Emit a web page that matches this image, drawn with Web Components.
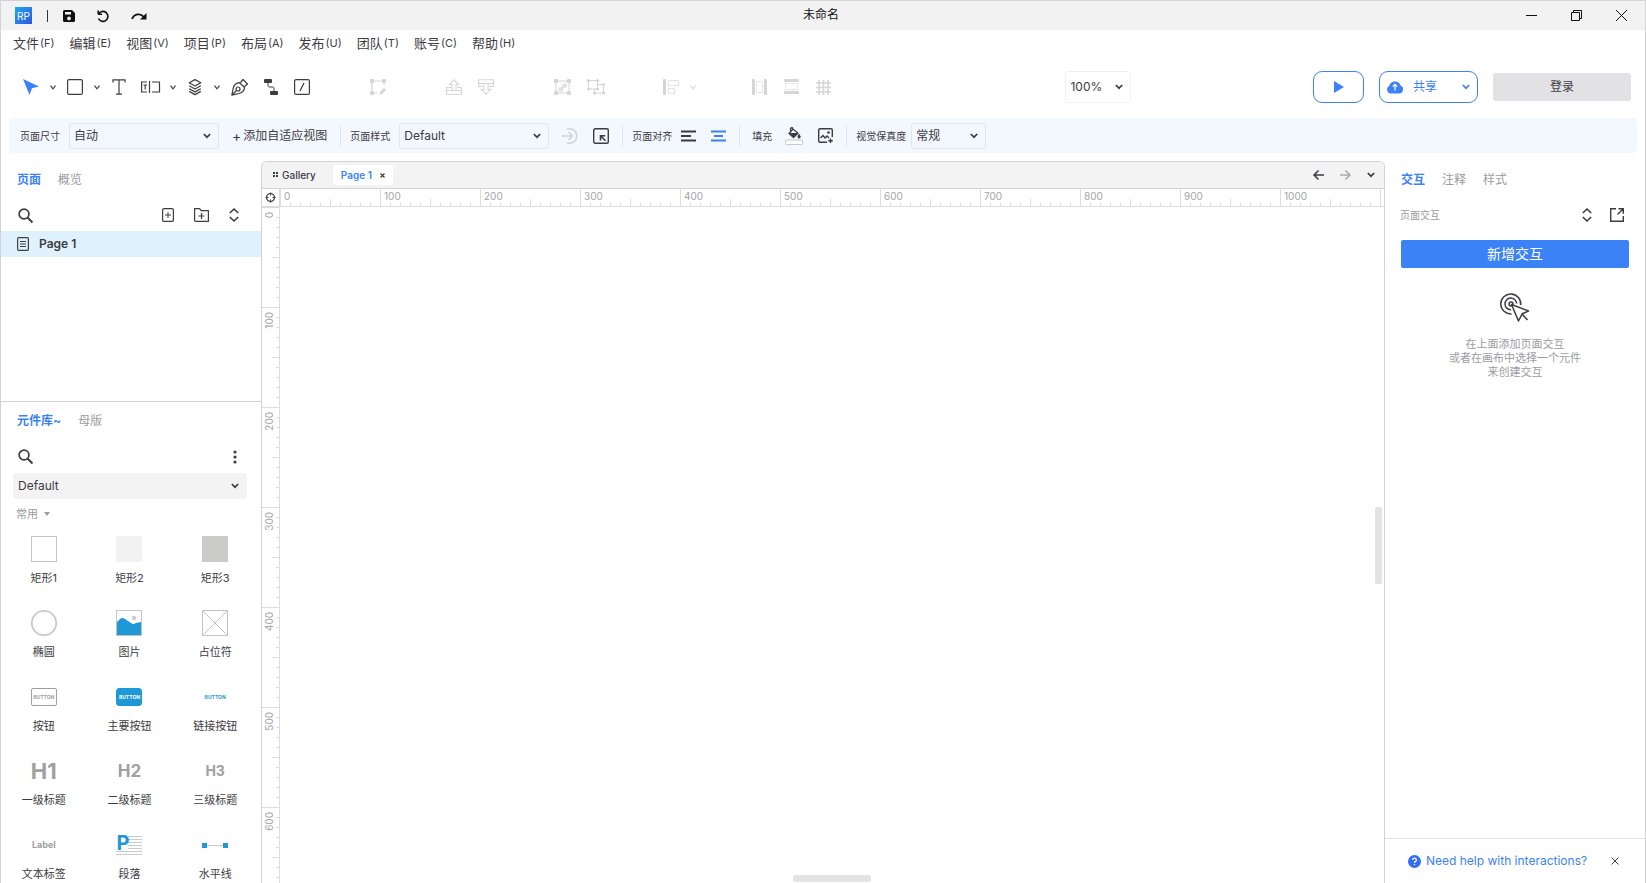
<!DOCTYPE html>
<html lang="zh-CN">
<head>
<meta charset="utf-8">
<title>未命名</title>
<style>
  :root {
    --ink: #3c3c43; --muted: #9b9ba1; --line: #d3d3d5; --soft: #e2e2e4;
    --blue: #3b82f6; --bar: #f3f7fe; --grey: #f3f3f3;
  }
  html, body { margin: 0; height: 100%; }
  body { font: 12px/16px Inter, "Noto Sans CJK SC", sans-serif; color: var(--ink); background: #fff; }
</style>
</head>
<body>
<rp-app></rp-app>
<script>
const RESET = `
  *, *::before { box-sizing: border-box; }
  button, select, input { font: inherit; color: inherit; margin: 0; padding: 0; border: 0; background: none; }
  button { display: inline-flex; align-items: center; justify-content: center; }
  a { color: inherit; text-decoration: none; }
  svg { display: block; overflow: visible; }
`;
function define(name, css, html, setup) {
  const tpl = document.createElement('template');
  tpl.innerHTML = `<style>${RESET}${css}</style>${html}`;
  customElements.define(name, class extends HTMLElement {
    connectedCallback() {
      if (this.shadowRoot) return;
      this.attachShadow({ mode: 'open' }).append(tpl.content.cloneNode(true));
      if (setup) setup(this, this.shadowRoot);
    }
  });
}

/* Each icon: [width, height, markup]. Strokes use currentColor. */
const S = 'fill="none" stroke="currentColor"';
const ICONS = {
  save: [12, 12, `<path fill="currentColor" fill-rule="evenodd" d="M1.500 0H9l3 3v7.500a1.500 1.500 0 0 1-1.500 1.500h-9A1.500 1.500 0 0 1 0 10.500v-9A1.500 1.500 0 0 1 1.500 0zM2 2v2.500h6V2zM6 6.500a1.900 1.900 0 1 0 0 3.800 1.900 1.900 0 0 0 0-3.800z"/>`],
  undo: [12, 12, `<path ${S} stroke-width="1.600" d="M1.200 4.200H5M1.200.500v3.700M1.500 4A5 5 0 1 1 1.400 8.500"/>`],
  redo: [16, 8, `<path ${S} stroke-width="1.800" d="M1 7c2-5 8-6.500 12-2"/><path fill="currentColor" d="M15.500 1v6.500H9z"/>`],
  min: [11, 11, `<path ${S} d="M0 5.500h11"/>`],
  restore: [11, 11, `<path ${S} d="M.500 2.500h8v8h-8zM2.500 2.500v-2h8v8h-2"/>`],
  close: [11, 11, `<path ${S} d="M0 0l11 11M11 0L0 11"/>`],
  cursor: [16, 16, `<path fill="#3b82f6" d="M0 0l16 7.500-7 1.700L6.500 16z"/>`],
  chev: [6, 5, `<path ${S} stroke-width="1.200" d="M.500.700L3 3.800 5.500.700"/>`],
  down: [8, 6, `<path ${S} stroke-width="1.700" d="M.800 1L4 4.200 7.200 1"/>`],
  rect: [16, 16, `<rect ${S} stroke-width="1.200" x=".600" y=".600" width="14.800" height="14.800" rx="1.500"/>`],
  text: [15, 16, `<path ${S} stroke-width="1.200" d="M2 3.500V.800h12v2.700M8 .800v14.400M5 15.200h6"/>`],
  field: [19, 14, `<path ${S} stroke-width="1.200" d="M6 2H.600v10H6M8.500 1v12M11 2h7.500v10H11M2.500 5h3.500M4.200 5v4.500"/>`],
  layers: [16, 16, `<path ${S} stroke-width="1.200" d="M8 .600l5.800 3.200L8 7 2.200 3.800zM2.200 6.800L8 10l5.800-3.200M2.200 9.700L8 12.900l5.800-3.200M2.200 12.400L8 15.600l5.800-3.200" stroke-linejoin="round"/>`],
  pen: [17, 17, `<path ${S} stroke-width="1.200" stroke-linejoin="round" d="M9.500 3.500l2.500-3 4.500 4.500-3 2.500M8.500 3.700L13.500 8.500c0 3-2.500 5-5.500 6L.800 16.200 2.300 9C3 6 6 4 8.500 3.700zM1 16l4.500-4.500"/><circle ${S} stroke-width="1.200" cx="7" cy="10" r="2"/>`],
  connector: [16, 16, `<rect fill="currentColor" x="1" y="0" width="8" height="4" rx="1"/><rect fill="currentColor" x="7" y="12" width="8" height="4" rx="1"/><path ${S} d="M5 4v2.500a1.500 1.500 0 0 0 1.500 1.500h3A1.500 1.500 0 0 1 11 9.500V12"/>`],
  slash: [16, 16, `<rect ${S} stroke-width="1.200" x=".600" y=".600" width="14.800" height="14.800" rx="1.500"/><path ${S} stroke-width="1.200" d="M6 12l4-8"/>`],
  points: [16, 16, `<path ${S} stroke-width="1.200" d="M2 2h12v4M2 2v12h5"/><g fill="currentColor"><rect width="4" height="4" rx="1"/><rect x="12" width="4" height="4" rx="1"/><rect y="12" width="4" height="4" rx="1"/><path d="M10 13l4-4 2 2-4 4-2.500.800z"/></g>`],
  front: [16, 16, `<path ${S} stroke-width="1.100" d="M6 11.500v-6H3.500L8 .700l4.500 4.800H10v6M5 8.500H.600v3H15.400v-3H11M.600 11.500v3.700h14.800v-3.700"/>`],
  back: [16, 16, `<path ${S} stroke-width="1.100" d="M6 4.500v6H3.500L8 15.300l4.500-4.800H10v-6M5 7.500H.600v-3H15.400v3H11M.600 4.500V.800h14.800v3.700"/>`],
  group: [17, 16, `<path ${S} stroke-width="1" d="M2 2h13v12H2z"/><g fill="currentColor"><rect width="4" height="4" rx="1"/><rect x="13" width="4" height="4" rx="1"/><rect y="12" width="4" height="4" rx="1"/><rect x="13" y="12" width="4" height="4" rx="1"/><path opacity=".700" d="M4.500 8.500l3-.500 1.500-3.500h4v4l-3 .500-1.500 3.500h-4z"/></g>`],
  ungroup: [18, 16, `<path ${S} stroke-width="1" d="M1.500 10V1.500h9v8.500zM10.500 5.500h6V14h-9v-4"/><g fill="currentColor"><circle cx="1.500" cy="1.500" r="1.600"/><circle cx="10.500" cy="1.500" r="1.600"/><circle cx="1.500" cy="10" r="1.600"/><circle cx="10.500" cy="10" r="1.600"/><circle cx="16.500" cy="5.500" r="1.600"/><circle cx="7.500" cy="14" r="1.600"/><circle cx="16.500" cy="14" r="1.600"/></g>`],
  align: [16, 16, `<rect fill="currentColor" width="3" height="16" rx="1"/><path ${S} opacity=".700" d="M5.500 1.500h10v5h-10zM5.500 9.500h6v5h-6z"/>`],
  disth: [16, 16, `<g fill="currentColor"><rect width="3" height="16" rx="1"/><rect x="12" width="3" height="16" rx="1"/></g><path ${S} opacity=".600" d="M4.500 2.500h6v11h-6z"/>`],
  distv: [16, 16, `<g fill="currentColor"><rect y="0" width="15" height="3" rx="1"/><rect y="12" width="15" height="3" rx="1"/></g><path ${S} opacity=".600" d="M1.500 4.500h12v6h-12z"/>`],
  grid: [15, 15, `<path ${S} stroke-width="1.500" d="M3 0v15M7.500 0v15M12 0v15M0 3h15M0 7.500h15M0 12h15"/>`],
  play: [10, 12, `<path fill="currentColor" d="M0 0l10 6-10 6z"/>`],
  cloud: [16, 14, `<path fill="#3b82f6" d="M4 13.500A4 4 0 0 1 2.200 6 6 6 0 0 1 13.600 5.500 4.200 4.200 0 0 1 12 13.500z"/><path fill="none" stroke="#fff" stroke-width="1.200" d="M8 10.500V4.500M5.800 6.500L8 4.300l2.200 2.200"/>`],
  circlearrow: [16, 16, `<path ${S} stroke-width="1.500" d="M5 1.300a7.200 7.200 0 1 1 0 13.400M0 8h10M6.500 4L10.500 8l-4 4"/>`],
  boxarrow: [16, 16, `<rect ${S} stroke-width="1.400" x=".700" y=".700" width="14.600" height="14.600" rx="1.500"/><path ${S} stroke-width="1.600" d="M7.500 12.500V7.800h4.700M7.500 7.800l5 5"/>`],
  left: [15, 12, `<path ${S} stroke-width="2" d="M0 1.500h15M0 6h10M0 10.500h15"/>`],
  center: [15, 12, `<path ${S} stroke-width="2" d="M0 1.500h15M3 6h9M0 10.500h15"/>`],
  bucket: [18, 18, `<path ${S} stroke-width="1.200" stroke-linejoin="round" d="M6.500.500l1.500 2M8 2l5 4.200-4.500 4.300L4 6.500zM5.500 4V1.500a1.500 1.500 0 0 1 2.500-.500"/><path fill="currentColor" d="M4.500 6h8.500L8.500 10.500zM14 6.500l1.600 2.800a1.600 1.600 0 1 1-3 0z"/><rect fill="#fff" stroke="#c9c9cc" x=".500" y="13" width="17" height="4.500" rx="1"/>`],
  image: [15, 15, `<path ${S} stroke-width="1.400" d="M9 14.300H2A1.300 1.300 0 0 1 .700 13V2A1.300 1.300 0 0 1 2 .700h11A1.300 1.300 0 0 1 14.300 2v7M2.500 10L5 7.500l2 2.500 2-2 2 2M12.500 10.500v4.500M10.200 12.700h4.600"/><circle fill="currentColor" cx="10.500" cy="4.500" r="1.300"/>`],
  search: [15, 15, `<circle ${S} stroke-width="1.700" cx="6" cy="6" r="4.900"/><path ${S} stroke-width="1.900" d="M9.500 9.500l5 5"/>`],
  addpage: [12, 14, `<rect ${S} stroke-width="1.200" x=".600" y=".600" width="10.800" height="12.800" rx="1.300"/><path ${S} d="M3 7h6M6 4v6"/>`],
  addfolder: [15, 14, `<path ${S} stroke-width="1.200" stroke-linejoin="round" d="M.600 12.400V.600h5l1.500 2h7.300v10.800H1.600a1 1 0 0 1-1-1zM4.500 8h6M7.500 5v6"/>`],
  updown: [10, 14, `<path ${S} stroke-width="1.600" d="M.800 5L5 1l4.200 4M.800 9L5 13l4.200-4"/>`],
  page: [12, 14, `<rect ${S} stroke-width="1.200" x=".600" y=".600" width="10.800" height="12.800" rx="1.300"/><path ${S} d="M3 4.500h6M3 7h6M3 9.500h6"/>`],
  dots: [4, 14, `<g fill="currentColor"><circle cx="2" cy="2" r="1.600"/><circle cx="2" cy="7" r="1.600"/><circle cx="2" cy="12" r="1.600"/></g>`],
  tri: [6, 4, `<path fill="currentColor" d="M0 0h6L3 4z"/>`],
  quad: [6, 6, `<path fill="currentColor" d="M0 0h2v2H0zM3 0h2v2H3zM0 3h2v2H0zM3 3h2v2H3z"/>`],
  xs: [5, 5, `<path ${S} stroke-width="1.300" d="M.500.500l4 4M4.500.500l-4 4"/>`],
  x: [8, 8, `<path ${S} d="M.500.500l7 7M7.500.500l-7 7"/>`],
  prev: [11, 10, `<path ${S} stroke-width="1.500" d="M11 5H1M5.500.500L1 5l4.500 4.500"/>`],
  next: [11, 10, `<path ${S} stroke-width="1.500" d="M0 5h10M5.500.500L10 5 5.500 9.500"/>`],
  target: [9, 9, `<circle ${S} stroke-width="1.200" cx="4.500" cy="4.500" r="4"/><path ${S} stroke-width="1.200" d="M4.500-.500v3M4.500 6.500v3M-.500 4.500h3M6.500 4.500h3"/>`],
  external: [14, 14, `<path ${S} stroke-width="1.400" d="M6 .700H.700v12.600h12.600V8M8.500.700h4.800v5M13 1L7.500 6.500"/>`],
  click: [30, 30, `<g ${S} stroke-width="1.500"><path d="M20.700 12a10 10 0 1 0-9.200 8.900M16.600 10.500a5.800 5.800 0 1 0-5.600 6.200"/><circle cx="11" cy="11" r="2"/><path stroke-linejoin="round" d="M11.500 11.500l17 6.500-6.300 2.800L18.500 28zM22.500 21.500l5 5.500"/></g>`],
  help: [13, 13, `<circle fill="#2f6df6" cx="6.500" cy="6.500" r="6.500"/><path fill="none" stroke="#fff" stroke-width="1.300" d="M4.600 5a1.900 1.900 0 1 1 2.700 1.700c-.600.300-.800.600-.800 1.200M6.500 9v1.300"/>`],
  wrect1: [26, 26, `<rect x=".500" y=".500" width="25" height="25" fill="#fff" stroke="#c4c4c4"/>`],
  wrect2: [26, 26, `<rect width="26" height="26" fill="#f2f2f2"/>`],
  wrect3: [26, 26, `<rect width="26" height="26" fill="#cacac9"/>`],
  woval: [26, 26, `<circle cx="13" cy="13" r="12.200" fill="#fff" stroke="#cacaca" stroke-width="1.800"/>`],
  wimage: [26, 26, `<rect x=".500" y=".500" width="25" height="25" fill="#fff" stroke="#c4c4c4"/><path fill="#1f98d8" d="M1 12l3-3q2.500-2 5 0l6 4q2 2 5 0l5-1v13H1z"/><circle cx="18" cy="8" r="2.200" fill="#cacaca"/>`],
  wholder: [26, 26, `<path d="M.500.500h25v25H.500zM.500.500l25 25M25.500.500l-25 25" fill="none" stroke="#c4c4c4"/>`],
  wline: [26, 5, `<path d="M3 2.500h20" stroke="#cacaca"/><path fill="#1f98d8" d="M0 0h5v5H0zM21 0h5v5h-5z"/>`],
  wlines: [26, 19, `<path d="M12 .500h14M12 3.500h14M12 6.500h14M12 9.500h14M12 12.500h14M0 15.500h26M0 18.500h26" stroke="#cacaca" fill="none"/>`],
};
define('rp-icon', ':host{display:inline-flex;flex:none}', '', (host, root) => {
  const [w, h, body] = ICONS[host.getAttribute('name')];
  root.innerHTML += `<svg width="${w}" height="${h}" viewBox="0 0 ${w} ${h}" aria-hidden="true">${body}</svg>`;
});

define('rp-logo', `
  :host { display: flex; width: 17px; height: 17px; align-items: center; justify-content: center;
    background: linear-gradient(135deg, #1fa8f5, #2f55d8); color: #fff; font-size: 10px; line-height: 16px; }`, 'RP');

/* Drop-down: a native select with a chevron laid over its right end. */
define('rp-select', `
  :host { display: grid; align-items: center; border: 1px solid #dfe5f0; border-radius: 3px; height: 26px; }
  select { grid-area: 1/1; appearance: none; width: 100%; height: 100%; padding-left: 4px; border-radius: 3px; }
  rp-icon { grid-area: 1/1; justify-self: end; margin-right: 7px; pointer-events: none; }`,
  '<select><option></option></select><rp-icon name="down"></rp-icon>',
  (host, root) => {
    root.querySelector('option').textContent = host.getAttribute('value');
    root.querySelector('select').setAttribute('aria-label', host.getAttribute('label'));
  });

define('rp-titlebar', `
  :host { display: grid; grid-template-columns: 1fr auto 1fr; align-items: center; height: 29px; background: #f2f2f2; padding: 0 18px 0 14px; color: #111; }
  .l { display: flex; align-items: center; gap: 15px; }
  .l button + button { margin-left: 7px; }
  i { width: 1px; height: 12px; background: #333; }
  h1 { font: inherit; margin: 0; padding-bottom: 2px; }
  .r { display: flex; justify-content: flex-end; gap: 34px; }`, `
  <div class="l"><rp-logo></rp-logo><i></i>
    <button aria-label="保存"><rp-icon name="save"></rp-icon></button>
    <button aria-label="撤销"><rp-icon name="undo"></rp-icon></button>
    <button aria-label="重做"><rp-icon name="redo"></rp-icon></button></div>
  <h1>未命名</h1>
  <div class="r"><button aria-label="最小化"><rp-icon name="min"></rp-icon></button>
    <button aria-label="还原"><rp-icon name="restore"></rp-icon></button>
    <button aria-label="关闭"><rp-icon name="close"></rp-icon></button></div>`);

define('rp-menubar', `
  :host { display: flex; gap: 15px; padding: 4px 12px 0; height: 30px; align-items: flex-start; font-size: 13px; line-height: 18px; }
  button small { font-size: 11px; margin-left: 1px; }`, '', (host, root) => {
  for (const m of '文件F 编辑E 视图V 项目P 布局A 发布U 团队T 账号C 帮助H'.split(' ')) {
    const b = document.createElement('button');
    b.innerHTML = `${m.slice(0, 2)}<small>(${m[2]})</small>`;
    root.append(b);
  }
});

define('rp-toolbar', `
  :host { display: flex; align-items: center; height: 54px; padding: 0 14px 0 22px; }
  .g { display: flex; align-items: center; gap: 15px; }
  .m { display: flex; align-items: center; gap: 11px; margin-right: -4px; }
  .m.tight { gap: 10px; }
  .g.off { gap: 16px; margin-left: 60px; }
  .m.off { margin-left: 58px; }
  .off { color: #d5d5d7; }
  .s1 { flex: 235; } .s2 { flex: 182; }
  rp-select { width: 66px; height: 32px; border-color: #f1f1f3; }
  .end { display: flex; align-items: center; gap: 15px; }
  .out { height: 32px; border: 1px solid var(--blue); border-radius: 9px; color: var(--blue); }
  .play { width: 51px; } .share { width: 99px; gap: 10px; font-size: 12px; }
  .share rp-icon:last-child { margin-left: 15px; }
  .login { width: 138px; height: 28px; background: #e2e2e4; border-radius: 3px; }`, `
  <div class="g">
    <div class="m"><button aria-label="选择"><rp-icon name="cursor"></rp-icon></button><button aria-label="选择菜单"><rp-icon name="chev"></rp-icon></button></div>
    <div class="m"><button aria-label="矩形"><rp-icon name="rect"></rp-icon></button><button aria-label="形状菜单"><rp-icon name="chev"></rp-icon></button></div>
    <button aria-label="文本"><rp-icon name="text"></rp-icon></button>
    <div class="m tight"><button aria-label="表单"><rp-icon name="field"></rp-icon></button><button aria-label="表单菜单"><rp-icon name="chev"></rp-icon></button></div>
    <div class="m"><button aria-label="图层"><rp-icon name="layers"></rp-icon></button><button aria-label="图层菜单"><rp-icon name="chev"></rp-icon></button></div>
    <button aria-label="钢笔"><rp-icon name="pen"></rp-icon></button>
    <button aria-label="连接"><rp-icon name="connector"></rp-icon></button>
    <button aria-label="切割"><rp-icon name="slash"></rp-icon></button>
  </div>
  <div class="g off"><button aria-label="编辑点"><rp-icon name="points"></rp-icon></button></div>
  <div class="g off"><button aria-label="置于顶层"><rp-icon name="front"></rp-icon></button><button aria-label="置于底层"><rp-icon name="back"></rp-icon></button></div>
  <div class="g off"><button aria-label="组合"><rp-icon name="group"></rp-icon></button><button aria-label="取消组合"><rp-icon name="ungroup"></rp-icon></button></div>
  <div class="m off"><button aria-label="对齐"><rp-icon name="align"></rp-icon></button><button aria-label="对齐菜单"><rp-icon name="chev"></rp-icon></button></div>
  <div class="g off"><button aria-label="水平分布"><rp-icon name="disth"></rp-icon></button><button aria-label="垂直分布"><rp-icon name="distv"></rp-icon></button><button aria-label="网格"><rp-icon name="grid"></rp-icon></button></div>
  <span class="s1"></span><rp-select value="100%" label="缩放"></rp-select><span class="s2"></span>
  <div class="end">
    <button class="out play" aria-label="预览"><rp-icon name="play"></rp-icon></button>
    <button class="out share"><rp-icon name="cloud"></rp-icon>共享<rp-icon name="down"></rp-icon></button>
    <button class="login">登录</button>
  </div>`);

define('rp-options', `
  :host { display: flex; align-items: center; gap: 9px; height: 35px; margin: 4px 8px 8px; padding: 0 11px; background: var(--bar); border-radius: 3px; }
  small { font-size: 10px; flex: none; }
  .g { display: flex; align-items: center; gap: 15px; margin: 0 4px; }
  .g.start { margin-left: 0; }
  i { width: 1px; height: 22px; background: #dde3ee; }
  .w { width: 150px; } .n { width: 75px; margin-left: -4px; }
  .off { color: #cfd3dc; } .on { color: var(--blue); }
  .f { margin-left: 3px; }
  .add { gap: 2px; } .add span { font-size: 14px; }`, `
  <small>页面尺寸</small><rp-select class="w" value="自动" label="页面尺寸"></rp-select>
  <div class="g"><button class="add"><span>+</span>添加自适应视图</button></div><i></i>
  <small>页面样式</small><rp-select class="w" value="Default" label="页面样式"></rp-select>
  <div class="g"><button class="off" aria-label="更新样式"><rp-icon name="circlearrow"></rp-icon></button><button aria-label="样式管理"><rp-icon name="boxarrow"></rp-icon></button></div><i></i>
  <small>页面对齐</small><div class="g start"><button aria-label="左对齐"><rp-icon name="left"></rp-icon></button><button class="on" aria-label="居中"><rp-icon name="center"></rp-icon></button></div><i></i>
  <small class="f">填充</small><div class="g"><button aria-label="填充颜色"><rp-icon name="bucket"></rp-icon></button><button aria-label="填充图片"><rp-icon name="image"></rp-icon></button></div><i></i>
  <small>视觉保真度</small><rp-select class="n" value="常规" label="视觉保真度"></rp-select>`);

define('rp-tabs', `
  :host { display: flex; gap: 17px; padding: 0 16px; height: 18px; line-height: 18px; color: var(--muted); }
  .on { color: var(--blue); font-weight: 700; }`, '', (host, root) => {
  host.getAttribute('items').split(',').forEach((t, i) => {
    const b = document.createElement('button');
    b.textContent = t;
    b.setAttribute('role', 'tab');
    if (!i) b.className = 'on';
    root.append(b);
  });
});

define('rp-pages', `
  :host { display: block; height: 241px; padding-top: 10px; border-bottom: 1px solid var(--line); }
  .bar { display: flex; align-items: center; gap: 20px; height: 42px; padding: 10px 22px 0 17px; }
  .bar button:first-child { margin-right: auto; }
  a { display: flex; align-items: center; gap: 10px; height: 26px; padding-left: 16px; background: #dff1fd; font-weight: 600; font-size: 12px; }`, `
  <rp-tabs items="页面,概览"></rp-tabs>
  <div class="bar"><button aria-label="搜索"><rp-icon name="search"></rp-icon></button>
    <button aria-label="添加页面"><rp-icon name="addpage"></rp-icon></button>
    <button aria-label="添加文件夹"><rp-icon name="addfolder"></rp-icon></button>
    <button aria-label="展开"><rp-icon name="updown"></rp-icon></button></div>
  <a href="#page1"><rp-icon name="page"></rp-icon>Page 1</a>`);

define('rp-widget', `
  :host { display: block; }
  button { display: grid; grid-template-rows: 42px 16px; width: 100%; justify-items: center; align-items: center; font-size: 11px; }
  `, '<button><slot></slot><span></span></button>',
  (host, root) => { root.querySelector('span').textContent = host.getAttribute('label'); });

define('rp-library', `
  :host { display: block; padding-top: 10px; overflow: hidden; flex: 1; }
  .bar { display: flex; align-items: center; justify-content: space-between; height: 43px; padding: 10px 24px 0 17px; }
  rp-select { margin: 0 14px 0 12px; background: var(--grey); border-color: var(--grey); }
  .cat { margin: 6px 15px 5px; gap: 6px; color: var(--muted); font-size: 11px; line-height: 18px; }
  .grid { display: grid; grid-template-columns: repeat(3, 1fr); row-gap: 16px; padding-right: 3px; }
  .btn { width: 26px; height: 18px; border: 1px solid #a0a0a0; border-radius: 2px; display: flex; align-items: center; justify-content: center; font-size: 5px; line-height: 6px; font-weight: 700; color: #a0a0a0; }
  .pri { background: #1f98d8; border-color: #1f98d8; color: #fff; border-radius: 3px; }
  .lnk { border-color: transparent; color: #1f98d8; }
  .h { color: #a0a0a0; font-weight: 700; }
  .h1 { font-size: 22px; } .h2 { font-size: 17px; } .h3 { font-size: 14px; } .lb { font-size: 9px; }
  .para { display: grid; align-items: start; justify-items: start; }
  .para > * { grid-area: 1/1; }
  .para b { color: #1f98d8; font-size: 20px; line-height: 14px; }`, `
  <rp-tabs items="元件库~,母版"></rp-tabs>
  <div class="bar"><button aria-label="搜索"><rp-icon name="search"></rp-icon></button><button aria-label="更多"><rp-icon name="dots"></rp-icon></button></div>
  <rp-select value="Default" label="元件库"></rp-select>
  <button class="cat">常用<rp-icon name="tri"></rp-icon></button>
  <div class="grid">
    <rp-widget label="矩形1"><rp-icon name="wrect1"></rp-icon></rp-widget>
    <rp-widget label="矩形2"><rp-icon name="wrect2"></rp-icon></rp-widget>
    <rp-widget label="矩形3"><rp-icon name="wrect3"></rp-icon></rp-widget>
    <rp-widget label="椭圆"><rp-icon name="woval"></rp-icon></rp-widget>
    <rp-widget label="图片"><rp-icon name="wimage"></rp-icon></rp-widget>
    <rp-widget label="占位符"><rp-icon name="wholder"></rp-icon></rp-widget>
    <rp-widget label="按钮"><span class="btn">BUTTON</span></rp-widget>
    <rp-widget label="主要按钮"><span class="btn pri">BUTTON</span></rp-widget>
    <rp-widget label="链接按钮"><span class="btn lnk">BUTTON</span></rp-widget>
    <rp-widget label="一级标题"><span class="h h1">H1</span></rp-widget>
    <rp-widget label="二级标题"><span class="h h2">H2</span></rp-widget>
    <rp-widget label="三级标题"><span class="h h3">H3</span></rp-widget>
    <rp-widget label="文本标签"><span class="h lb">Label</span></rp-widget>
    <rp-widget label="段落"><span class="para"><rp-icon name="wlines"></rp-icon><b>P</b></span></rp-widget>
    <rp-widget label="水平线"><rp-icon name="wline"></rp-icon></rp-widget>
  </div>`);

/* Ruler: 100px cells; gradients draw the 10px and 50px ticks. */
define('rp-ruler', `
  :host { display: flex; overflow: hidden; min-width: 0; min-height: 0; font-size: 10px; line-height: 14px; color: #a3a3a8; --t: #dcdcde; }
  :host([axis=x]) { height: 18px; border-bottom: 1px solid var(--t); }
  :host([axis=y]) { flex-direction: column; width: 18px; border-right: 1px solid var(--t); }
  div { flex: 0 0 100px; padding: 0 3px; }
  :host([axis=x]) div { border-left: 1px solid var(--t);
    background: linear-gradient(var(--t), var(--t)) 49px 100% / 1px 7px no-repeat, repeating-linear-gradient(90deg, transparent 0 9px, var(--t) 9px 10px) 0 100% / 99px 3px no-repeat; }
  :host([axis=y]) div { border-top: 1px solid var(--t); padding: 4px 0; display: flex; align-items: flex-start;
    background: linear-gradient(var(--t), var(--t)) 100% 49px / 7px 1px no-repeat, repeating-linear-gradient(transparent 0 9px, var(--t) 9px 10px) 100% 0 / 3px 99px no-repeat; }
  :host([axis=y]) span { writing-mode: vertical-rl; transform: rotate(180deg); }`, '', (host, root) => {
  for (let n = 0; n < 40; n++) {
    const d = document.createElement('div');
    const s = document.createElement('span');
    s.textContent = n * 100;
    d.append(s);
    root.append(d);
    const r = d.getBoundingClientRect(), h = host.getBoundingClientRect();
    if (r.right > h.right + 100 || r.bottom > h.bottom + 100) { d.remove(); break; }
    if (host.getAttribute('axis') === 'x' && r.left + 10 > h.right) s.remove();
  }
});

define('rp-stage', `
  :host { display: grid; grid-template: 27px 18px 1fr / 18px 1fr; min-width: 0; min-height: 0; border: 1px solid var(--line); border-bottom: 0; border-radius: 6px 6px 0 0; overflow: hidden; }
  .tabs { grid-column: 1 / 3; display: flex; align-items: center; background: var(--grey); border-bottom: 1px solid var(--line); font-size: 10px; padding: 0 9px 0 11px; }
  .tab { gap: 3px; height: 20px; font-weight: 500; }
  .on { background: #fff; color: var(--blue); font-weight: 600; gap: 8px; padding: 0 8px; margin-left: 17px; border-radius: 2px; }
  .on rp-icon { color: #444; }
  nav { margin-left: auto; display: flex; gap: 16px; }
  .off { color: #aaa; }
  .corner { display: flex; align-items: center; justify-content: center; border-right: 1px solid #dcdcde; border-bottom: 1px solid #dcdcde; }
  .canvas { position: relative; background: #fff; }
  .v, .h { position: absolute; background: #e3e3e4; border-radius: 2px; }
  .v { right: 2px; top: 44.4%; width: 7px; height: 77px; }
  .h { bottom: 1px; left: 46.5%; width: 78px; height: 7px; }`, `
  <div class="tabs"><button class="tab"><rp-icon name="quad"></rp-icon>Gallery</button>
    <button class="tab on">Page 1<rp-icon name="xs"></rp-icon></button>
    <nav><button aria-label="后退"><rp-icon name="prev"></rp-icon></button><button class="off" aria-label="前进"><rp-icon name="next"></rp-icon></button><button aria-label="标签列表"><rp-icon name="down"></rp-icon></button></nav></div>
  <button class="corner" aria-label="回到原点"><rp-icon name="target"></rp-icon></button>
  <rp-ruler axis="x"></rp-ruler><rp-ruler axis="y"></rp-ruler>
  <div class="canvas"><div class="v"></div><div class="h"></div></div>`);

define('rp-inspector', `
  :host { display: flex; flex-direction: column; padding-top: 10px; min-height: 0; }
  .bar { display: flex; align-items: center; gap: 18px; height: 42px; padding: 10px 21px 0 15px; }
  .bar small { font-size: 10px; color: var(--muted); margin-right: auto; }
  .new { margin: 9px 16px 0; height: 28px; background: var(--blue); color: #fff; border-radius: 2px; font-size: 14px; }
  rp-icon[name=click] { align-self: center; margin-top: 25px; }
  p { margin: 14px 0 0; text-align: center; font-size: 11px; line-height: 14px; color: var(--muted); }
  footer { display: flex; align-items: center; margin-top: auto; height: 45px; border-top: 1px solid var(--soft); padding: 0 26px 0 23px; }
  a { display: flex; align-items: center; gap: 5px; color: var(--blue); font-size: 12px; margin-right: auto; }`, `
  <rp-tabs items="交互,注释,样式"></rp-tabs>
  <div class="bar"><small>页面交互</small><button aria-label="展开"><rp-icon name="updown"></rp-icon></button><button aria-label="弹出"><rp-icon name="external"></rp-icon></button></div>
  <button class="new">新增交互</button>
  <rp-icon name="click"></rp-icon>
  <p>在上面添加页面交互<br>或者在画布中选择一个元件<br>来创建交互</p>
  <footer><a href="#help"><rp-icon name="help"></rp-icon>Need help with interactions?</a><button aria-label="关闭"><rp-icon name="x"></rp-icon></button></footer>`);

define('rp-app', `
  :host { display: flex; flex-direction: column; height: 100vh; box-sizing: border-box; border: 1px solid var(--line); border-bottom: 0; overflow: hidden; }
  main { flex: 1; display: grid; grid-template-columns: 260px 1fr 260px; min-height: 0; }
  aside { display: flex; flex-direction: column; min-height: 0; }`, `
  <rp-titlebar></rp-titlebar><rp-menubar></rp-menubar><rp-toolbar></rp-toolbar><rp-options></rp-options>
  <main><aside><rp-pages></rp-pages><rp-library></rp-library></aside><rp-stage></rp-stage><rp-inspector></rp-inspector></main>`);
</script>
</body>
</html>
